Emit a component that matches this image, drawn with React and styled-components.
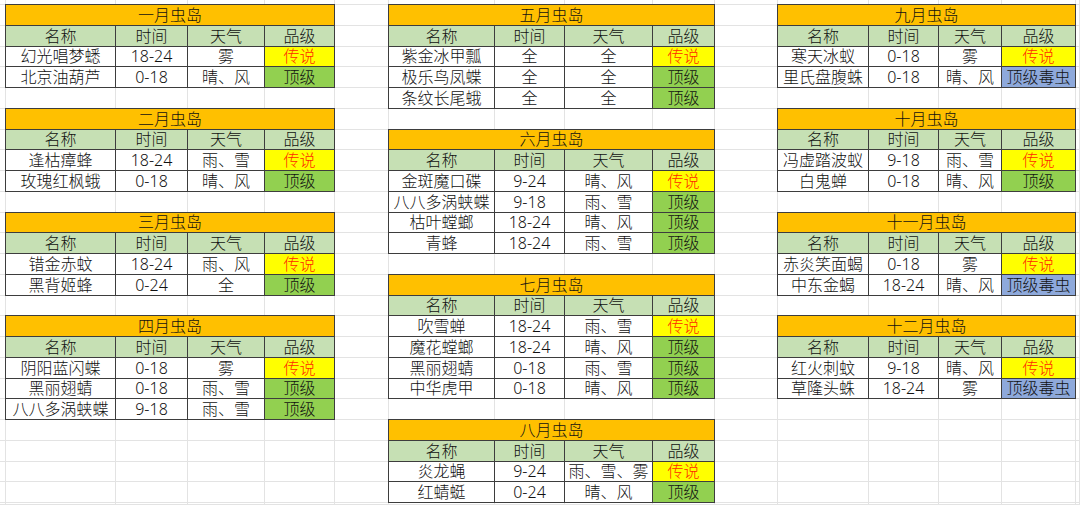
import styled, { createGlobalStyle } from "styled-components";

const GlobalStyle = createGlobalStyle`
  html, body {
    margin: 0;
    padding: 0;
    background: #fff;
  }
  body {
    font-family: "Noto Sans", "Noto Sans CJK SC", sans-serif;
    overflow: hidden;
  }
`;

// column widths of the sheet, left to right
const COLS = [6, 110, 72, 77, 70, 54, 106, 70, 88, 62, 63, 91, 70, 63, 74, 4];
const ROW_H = 20.75;
const ROWS = 26; // a cut top row, 24 full rows, a cut bottom row

const Sheet = styled.div`
  display: grid;
  grid-template-columns: ${COLS.map((w) => w + "px").join(" ")};
  grid-template-rows: 5px repeat(24, ${ROW_H}px) 2px;
  width: 1080px;
  height: 505px;
  overflow: hidden;
  background: #fff;
`;

const Blank = styled.div`
  border-right: 1px solid #e3e3e3;
  border-bottom: 1px solid #e3e3e3;
`;

const fills = {
  title: "#ffc000",
  head: "#c6e0b4",
  plain: "#ffffff",
  legend: "#ffff00",
  top: "#92d050",
  venom: "#8ea9db",
};

const Cell = styled.div`
  grid-column: span ${(p) => p.$span || 1};
  margin: -1px 0 0 -1px;
  border: 1px solid #3d3d3d;
  background: ${(p) => fills[p.$kind]};
  color: ${(p) => (p.$kind === "legend" ? "#ff2a00" : "#111")};
  display: flex;
  align-items: center;
  justify-content: center;
  font-size: 16px;
  font-weight: 300;
  line-height: 1;
  white-space: nowrap;
  overflow: hidden;
  position: relative;
`;

const HEAD = ["名称", "时间", "天气", "品级"];

const gradeKind = (g) => (g === "传说" ? "legend" : g === "顶级" ? "top" : "venom");

const TABLES = [
  { title: "一月虫岛", row: 1, col: 1, items: [
    ["幻光唱梦蟋", "18-24", "雾", "传说"],
    ["北京油葫芦", "0-18", "晴、风", "顶级"],
  ] },
  { title: "二月虫岛", row: 6, col: 1, items: [
    ["逢枯瘴蜂", "18-24", "雨、雪", "传说"],
    ["玫瑰红枫蛾", "0-18", "晴、风", "顶级"],
  ] },
  { title: "三月虫岛", row: 11, col: 1, items: [
    ["错金赤蚊", "18-24", "雨、风", "传说"],
    ["黑背姬蜂", "0-24", "全", "顶级"],
  ] },
  { title: "四月虫岛", row: 16, col: 1, items: [
    ["阴阳蓝闪蝶", "0-18", "雾", "传说"],
    ["黑丽翅蜻", "0-18", "雨、雪", "顶级"],
    ["八八多涡蛱蝶", "9-18", "雨、雪", "顶级"],
  ] },
  { title: "五月虫岛", row: 1, col: 6, items: [
    ["紫金冰甲瓢", "全", "全", "传说"],
    ["极乐鸟凤蝶", "全", "全", "顶级"],
    ["条纹长尾蛾", "全", "全", "顶级"],
  ] },
  { title: "六月虫岛", row: 7, col: 6, items: [
    ["金斑魔口碟", "9-24", "晴、风", "传说"],
    ["八八多涡蛱蝶", "9-18", "雨、雪", "顶级"],
    ["枯叶螳螂", "18-24", "晴、风", "顶级"],
    ["青蜂", "18-24", "雨、雪", "顶级"],
  ] },
  { title: "七月虫岛", row: 14, col: 6, items: [
    ["吹雪蝉", "18-24", "雨、雪", "传说"],
    ["魔花螳螂", "18-24", "晴、风", "顶级"],
    ["黑丽翅蜻", "0-18", "雨、雪", "顶级"],
    ["中华虎甲", "0-18", "晴、风", "顶级"],
  ] },
  { title: "八月虫岛", row: 21, col: 6, items: [
    ["炎龙蝇", "9-24", "雨、雪、雾", "传说"],
    ["红蜻蜓", "0-24", "晴、风", "顶级"],
  ] },
  { title: "九月虫岛", row: 1, col: 11, items: [
    ["寒天冰蚁", "0-18", "雾", "传说"],
    ["里氏盘腹蛛", "0-18", "晴、风", "顶级毒虫"],
  ] },
  { title: "十月虫岛", row: 6, col: 11, items: [
    ["冯虚踏波蚁", "9-18", "雨、雪", "传说"],
    ["白鬼蝉", "0-18", "晴、风", "顶级"],
  ] },
  { title: "十一月虫岛", row: 11, col: 11, items: [
    ["赤炎笑面蝎", "0-18", "雾", "传说"],
    ["中东金蝎", "18-24", "晴、风", "顶级毒虫"],
  ] },
  { title: "十二月虫岛", row: 16, col: 11, items: [
    ["红火刺蚊", "9-18", "晴、风", "传说"],
    ["草隆头蛛", "18-24", "雾", "顶级毒虫"],
  ] },
];

// map every sheet position to what sits there
const buildMap = () => {
  const map = {};
  TABLES.forEach((t) => {
    map[`${t.row},${t.col}`] = { kind: "title", text: t.title, span: 4 };
    for (let i = 1; i < 4; i++) map[`${t.row},${t.col + i}`] = { skip: true };
    HEAD.forEach((h, i) => {
      map[`${t.row + 1},${t.col + i}`] = { kind: "head", text: h };
    });
    t.items.forEach((r, ri) => {
      r.forEach((v, i) => {
        map[`${t.row + 2 + ri},${t.col + i}`] = {
          kind: i === 3 ? gradeKind(v) : "plain",
          text: v,
        };
      });
    });
  });
  return map;
};

export default function App() {
  const map = buildMap();
  const cells = [];
  for (let r = 0; r < ROWS; r++) {
    for (let c = 0; c < COLS.length; c++) {
      const key = `${r},${c}`;
      const m = map[key];
      if (!m) cells.push(<Blank key={key} />);
      else if (!m.skip)
        cells.push(
          <Cell key={key} $kind={m.kind} $span={m.span}>
            {m.text}
          </Cell>
        );
    }
  }
  return (
    <>
      <GlobalStyle />
      <Sheet>{cells}</Sheet>
    </>
  );
}
